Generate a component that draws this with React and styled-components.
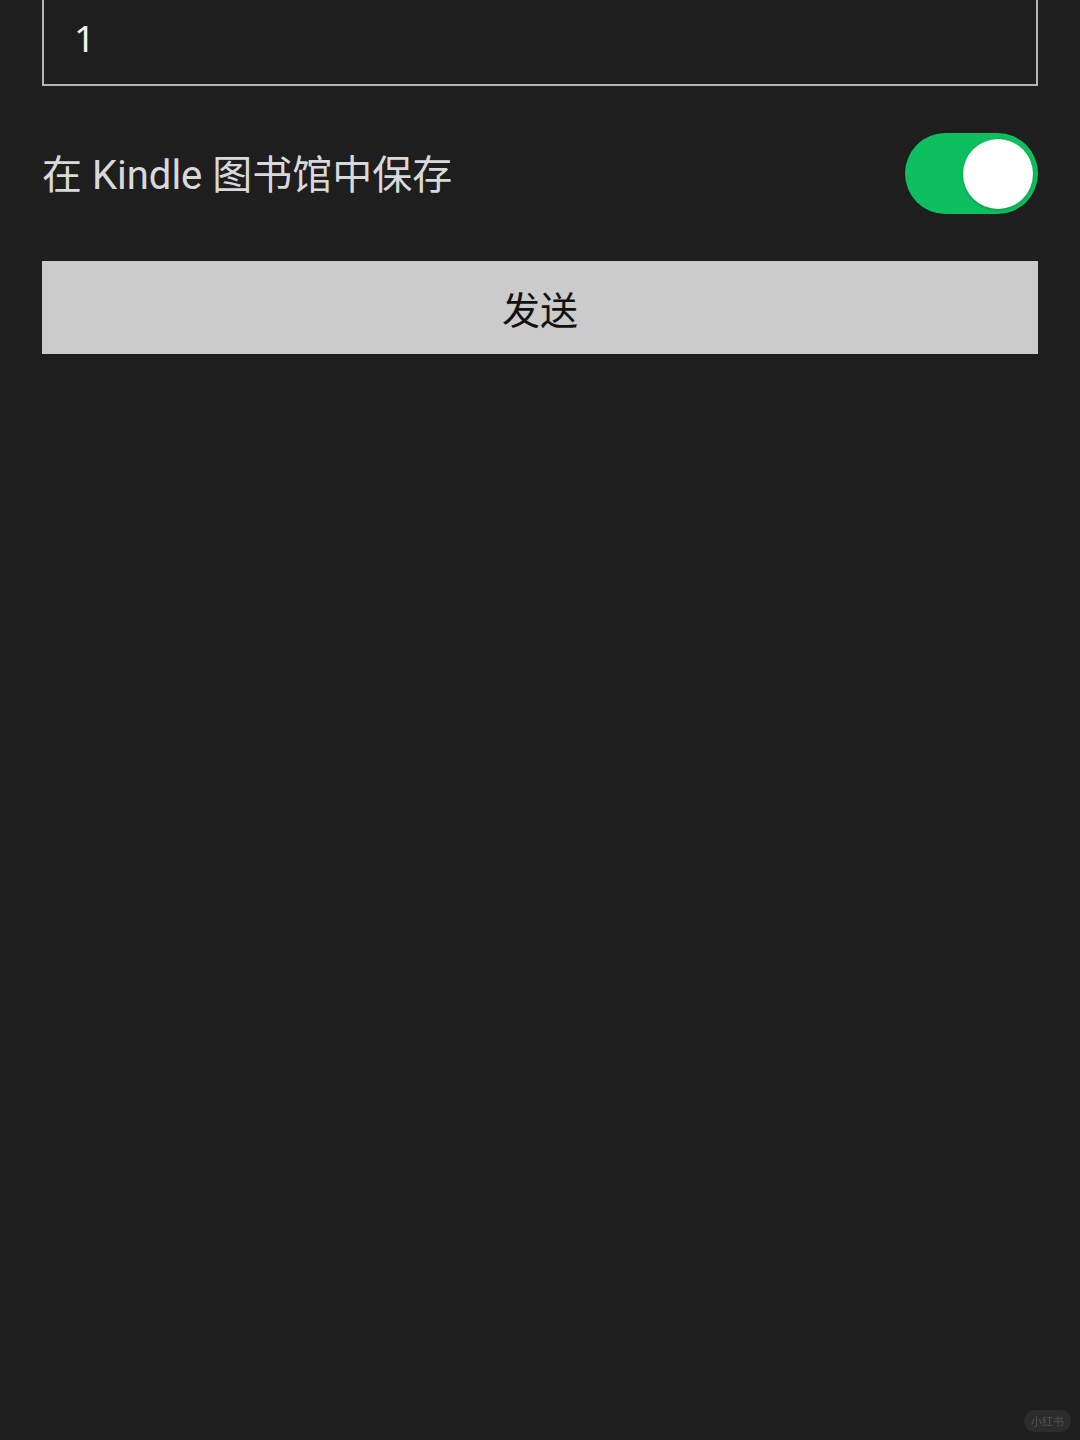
import React, { useState } from 'react'
import styled, { createGlobalStyle } from 'styled-components'

const GlobalStyle = createGlobalStyle`
  html, body {
    margin: 0;
    padding: 0;
    background: #1e1e1e;
  }
  body {
    font-family: Roboto, "Noto Sans CJK SC", sans-serif;
  }
`

const Page = styled.div`
  min-height: 1440px;
  padding: 0 42px;
  background: #1e1e1e;
  display: flex;
  flex-direction: column;
  gap: 47px;
  box-sizing: border-box;
`

const Field = styled.div`
  margin-top: -40px;
  height: 126px;
  box-sizing: border-box;
  border: 2px solid #b4b4b4;
  display: flex;
  align-items: flex-end;
  padding: 0 0 20px 30px;
  color: #f2f2f2;
  font-family: "Noto Sans", sans-serif;
  font-size: 37px;
  line-height: 52px;
`

const Row = styled.div`
  display: flex;
  align-items: center;
  justify-content: space-between;
  height: 81px;
`

const Label = styled.span`
  color: #d9d9d9;
  font-size: 40px;
  font-family: Roboto, "Noto Sans CJK SC", sans-serif;
  margin-top: -3px;
`

const Track = styled.button`
  width: 133px;
  height: 81px;
  border: none;
  border-radius: 41px;
  padding: 5px;
  background: ${p => (p.$on ? '#0dbf5e' : '#555')};
  display: flex;
  justify-content: ${p => (p.$on ? 'flex-end' : 'flex-start')};
  align-items: center;
  cursor: pointer;
`

const Knob = styled.span`
  width: 70px;
  height: 70px;
  border-radius: 50%;
  background: #fff;
  box-shadow: 0 1px 3px rgba(0, 0, 0, 0.25);
`

const SendButton = styled.button`
  height: 93px;
  border: none;
  background: #cbcbcb;
  color: #111;
  font-size: 38px;
  font-family: "Noto Sans CJK SC", sans-serif;
  cursor: pointer;
`

const Mark = styled.span`
  position: fixed;
  right: 9px;
  bottom: 8px;
  padding: 3px 7px;
  border-radius: 11px;
  background: #2c2c2c;
  color: #555;
  font-size: 11px;
  font-family: "Noto Sans CJK SC", sans-serif;
`

const App = () => {
  const [save, setSave] = useState(true)
  return (
    <>
      <GlobalStyle />
      <Page>
        <Field>1</Field>
        <Row>
          <Label>在 Kindle 图书馆中保存</Label>
          <Track $on={save} onClick={() => setSave(!save)}>
            <Knob />
          </Track>
        </Row>
        <SendButton>发送</SendButton>
      </Page>
      <Mark>小红书</Mark>
    </>
  )
}

export default App
